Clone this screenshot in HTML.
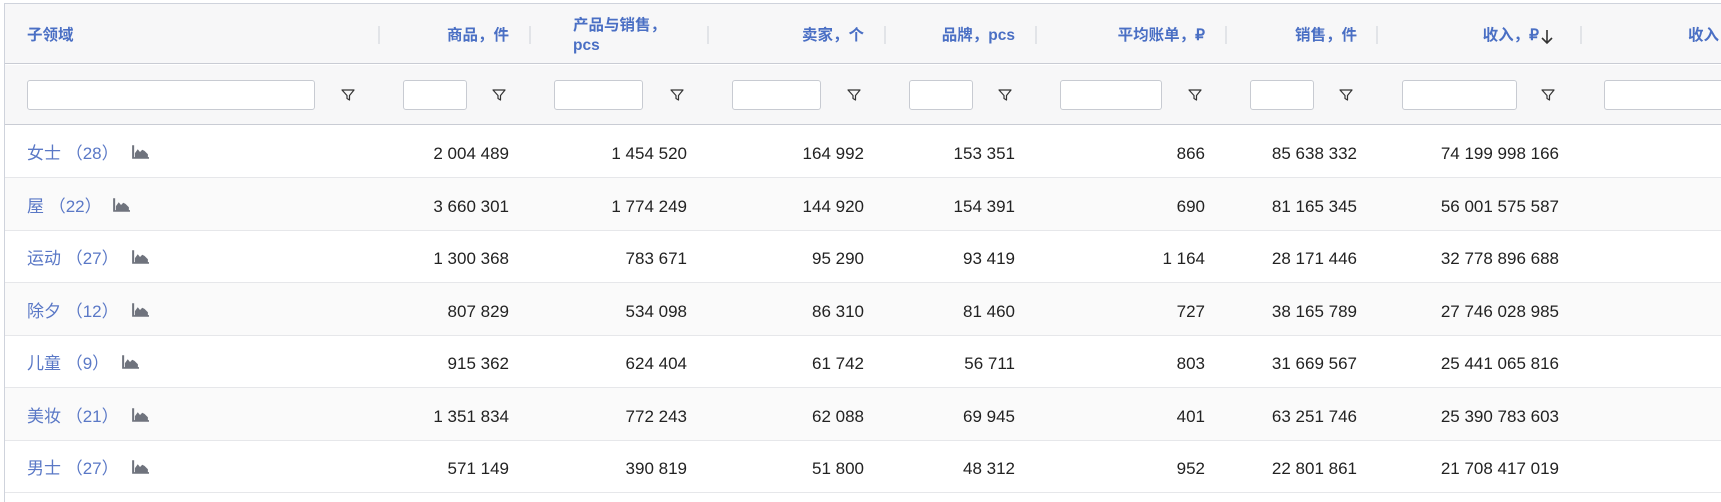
<!DOCTYPE html>
<html><head><meta charset="utf-8"><style>
*{margin:0;padding:0;box-sizing:border-box}
html,body{width:1721px;height:502px;overflow:hidden}
body{background:#fff;font-family:"Liberation Sans","Noto Sans CJK SC",sans-serif;position:relative}
.frame{position:absolute;left:4px;top:3px;width:1717px;height:499px;border:1px solid #cfd3dc;border-right:none;border-bottom:none}
.hdr{position:absolute;left:5px;top:4px;width:1716px;height:60px;background:#f7f7f8;border-bottom:1px solid #c9ccd4}
.flt{position:absolute;left:5px;top:65px;width:1716px;height:60px;background:#f7f7f8;border-bottom:1px solid #c9ccd4}
.h{position:absolute;color:#4a6fc4;font-weight:bold;font-size:15.5px;line-height:20px;text-align:right;white-space:nowrap}
.sep{position:absolute;top:26px;width:2px;height:18px;background:#e2e4e8}
.in{position:absolute;top:80px;height:30px;background:#fff;border:1px solid #c8cbd2;border-radius:3px}
.fn{position:absolute;top:87px;width:16px;height:16px}
.row{position:absolute;left:5px;width:1716px;height:53px;border-bottom:1px solid #e6e7ea}
.alt{background:#fafafa}
.c{position:absolute;font-size:17px;color:#222;line-height:20px;text-align:right;top:19px}
.nm{position:absolute;left:22px;top:19px;font-size:17px;color:#5a78c6;line-height:20px}
.ic{position:absolute;top:19px;width:18px;height:16px}
</style></head><body>
<div class="hdr"></div><div class="flt"></div>
<div class="frame"></div>
<div class="h" style="left:27px;top:26px;text-align:left">子领域</div>
<div class="h" style="right:1212px;top:26px">商品，件</div>
<div class="h" style="left:573px;top:16px;text-align:left">产品与销售，<br>pcs</div>
<div class="h" style="right:857px;top:26px">卖家，个</div>
<div class="h" style="right:706px;top:26px">品牌，pcs</div>
<div class="h" style="right:516px;top:26px">平均账单，₽</div>
<div class="h" style="right:364px;top:26px">销售，件</div>
<div class="h" style="right:182px;top:26px">收入，₽</div>
<svg style="position:absolute;left:1540px;top:29px" width="14" height="16" viewBox="0 0 14 16"><path d="M7 1V14M2 9L7 14L12 9" fill="none" stroke="#333" stroke-width="1.6"/></svg>
<div class="h" style="left:1688px;top:26px;text-align:left">收入</div>
<div class="sep" style="left:378px"></div><div class="sep" style="left:529px"></div><div class="sep" style="left:707px"></div><div class="sep" style="left:884px"></div><div class="sep" style="left:1035px"></div><div class="sep" style="left:1225px"></div><div class="sep" style="left:1376px"></div><div class="sep" style="left:1580px"></div>
<div class="in" style="left:27px;width:288px"></div>
<div class="in" style="left:403px;width:64px"></div>
<div class="in" style="left:554px;width:89px"></div>
<div class="in" style="left:732px;width:89px"></div>
<div class="in" style="left:909px;width:64px"></div>
<div class="in" style="left:1060px;width:102px"></div>
<div class="in" style="left:1250px;width:64px"></div>
<div class="in" style="left:1402px;width:115px"></div>
<div class="in" style="left:1604px;width:130px"></div>
<svg class="fn" style="left:340px" viewBox="0 0 16 16"><path d="M2 3h12L9.5 8.5V13L7 11.5V8.5Z" fill="none" stroke="#333" stroke-width="1.2" stroke-linejoin="round"/></svg>
<svg class="fn" style="left:491px" viewBox="0 0 16 16"><path d="M2 3h12L9.5 8.5V13L7 11.5V8.5Z" fill="none" stroke="#333" stroke-width="1.2" stroke-linejoin="round"/></svg>
<svg class="fn" style="left:669px" viewBox="0 0 16 16"><path d="M2 3h12L9.5 8.5V13L7 11.5V8.5Z" fill="none" stroke="#333" stroke-width="1.2" stroke-linejoin="round"/></svg>
<svg class="fn" style="left:846px" viewBox="0 0 16 16"><path d="M2 3h12L9.5 8.5V13L7 11.5V8.5Z" fill="none" stroke="#333" stroke-width="1.2" stroke-linejoin="round"/></svg>
<svg class="fn" style="left:997px" viewBox="0 0 16 16"><path d="M2 3h12L9.5 8.5V13L7 11.5V8.5Z" fill="none" stroke="#333" stroke-width="1.2" stroke-linejoin="round"/></svg>
<svg class="fn" style="left:1187px" viewBox="0 0 16 16"><path d="M2 3h12L9.5 8.5V13L7 11.5V8.5Z" fill="none" stroke="#333" stroke-width="1.2" stroke-linejoin="round"/></svg>
<svg class="fn" style="left:1338px" viewBox="0 0 16 16"><path d="M2 3h12L9.5 8.5V13L7 11.5V8.5Z" fill="none" stroke="#333" stroke-width="1.2" stroke-linejoin="round"/></svg>
<svg class="fn" style="left:1540px" viewBox="0 0 16 16"><path d="M2 3h12L9.5 8.5V13L7 11.5V8.5Z" fill="none" stroke="#333" stroke-width="1.2" stroke-linejoin="round"/></svg>

<div class="row" style="top:125px"><span class="nm">女士 （28）</span><svg class="ic" style="left:126px" viewBox="0 0 16 14"><path d="M1 1V13H16V11.5H2.8V1Z M3.5 11.5V8L6 4.5L8 7L10 5L12 6L15 9V11.5Z" fill="#6f737d"/></svg>
<span class="c" style="right:1212px">2 004 489</span><span class="c" style="right:1034px">1 454 520</span><span class="c" style="right:857px">164 992</span><span class="c" style="right:706px">153 351</span><span class="c" style="right:516px">866</span><span class="c" style="right:364px">85 638 332</span><span class="c" style="right:162px">74 199 998 166</span></div>
<div class="row alt" style="top:178px"><span class="nm">屋 （22）</span><svg class="ic" style="left:107px" viewBox="0 0 16 14"><path d="M1 1V13H16V11.5H2.8V1Z M3.5 11.5V8L6 4.5L8 7L10 5L12 6L15 9V11.5Z" fill="#6f737d"/></svg>
<span class="c" style="right:1212px">3 660 301</span><span class="c" style="right:1034px">1 774 249</span><span class="c" style="right:857px">144 920</span><span class="c" style="right:706px">154 391</span><span class="c" style="right:516px">690</span><span class="c" style="right:364px">81 165 345</span><span class="c" style="right:162px">56 001 575 587</span></div>
<div class="row" style="top:230px"><span class="nm">运动 （27）</span><svg class="ic" style="left:126px" viewBox="0 0 16 14"><path d="M1 1V13H16V11.5H2.8V1Z M3.5 11.5V8L6 4.5L8 7L10 5L12 6L15 9V11.5Z" fill="#6f737d"/></svg>
<span class="c" style="right:1212px">1 300 368</span><span class="c" style="right:1034px">783 671</span><span class="c" style="right:857px">95 290</span><span class="c" style="right:706px">93 419</span><span class="c" style="right:516px">1 164</span><span class="c" style="right:364px">28 171 446</span><span class="c" style="right:162px">32 778 896 688</span></div>
<div class="row alt" style="top:283px"><span class="nm">除夕 （12）</span><svg class="ic" style="left:126px" viewBox="0 0 16 14"><path d="M1 1V13H16V11.5H2.8V1Z M3.5 11.5V8L6 4.5L8 7L10 5L12 6L15 9V11.5Z" fill="#6f737d"/></svg>
<span class="c" style="right:1212px">807 829</span><span class="c" style="right:1034px">534 098</span><span class="c" style="right:857px">86 310</span><span class="c" style="right:706px">81 460</span><span class="c" style="right:516px">727</span><span class="c" style="right:364px">38 165 789</span><span class="c" style="right:162px">27 746 028 985</span></div>
<div class="row" style="top:335px"><span class="nm">儿童 （9）</span><svg class="ic" style="left:116px" viewBox="0 0 16 14"><path d="M1 1V13H16V11.5H2.8V1Z M3.5 11.5V8L6 4.5L8 7L10 5L12 6L15 9V11.5Z" fill="#6f737d"/></svg>
<span class="c" style="right:1212px">915 362</span><span class="c" style="right:1034px">624 404</span><span class="c" style="right:857px">61 742</span><span class="c" style="right:706px">56 711</span><span class="c" style="right:516px">803</span><span class="c" style="right:364px">31 669 567</span><span class="c" style="right:162px">25 441 065 816</span></div>
<div class="row alt" style="top:388px"><span class="nm">美妆 （21）</span><svg class="ic" style="left:126px" viewBox="0 0 16 14"><path d="M1 1V13H16V11.5H2.8V1Z M3.5 11.5V8L6 4.5L8 7L10 5L12 6L15 9V11.5Z" fill="#6f737d"/></svg>
<span class="c" style="right:1212px">1 351 834</span><span class="c" style="right:1034px">772 243</span><span class="c" style="right:857px">62 088</span><span class="c" style="right:706px">69 945</span><span class="c" style="right:516px">401</span><span class="c" style="right:364px">63 251 746</span><span class="c" style="right:162px">25 390 783 603</span></div>
<div class="row" style="top:440px"><span class="nm">男士 （27）</span><svg class="ic" style="left:126px" viewBox="0 0 16 14"><path d="M1 1V13H16V11.5H2.8V1Z M3.5 11.5V8L6 4.5L8 7L10 5L12 6L15 9V11.5Z" fill="#6f737d"/></svg>
<span class="c" style="right:1212px">571 149</span><span class="c" style="right:1034px">390 819</span><span class="c" style="right:857px">51 800</span><span class="c" style="right:706px">48 312</span><span class="c" style="right:516px">952</span><span class="c" style="right:364px">22 801 861</span><span class="c" style="right:162px">21 708 417 019</span></div>
</body></html>
